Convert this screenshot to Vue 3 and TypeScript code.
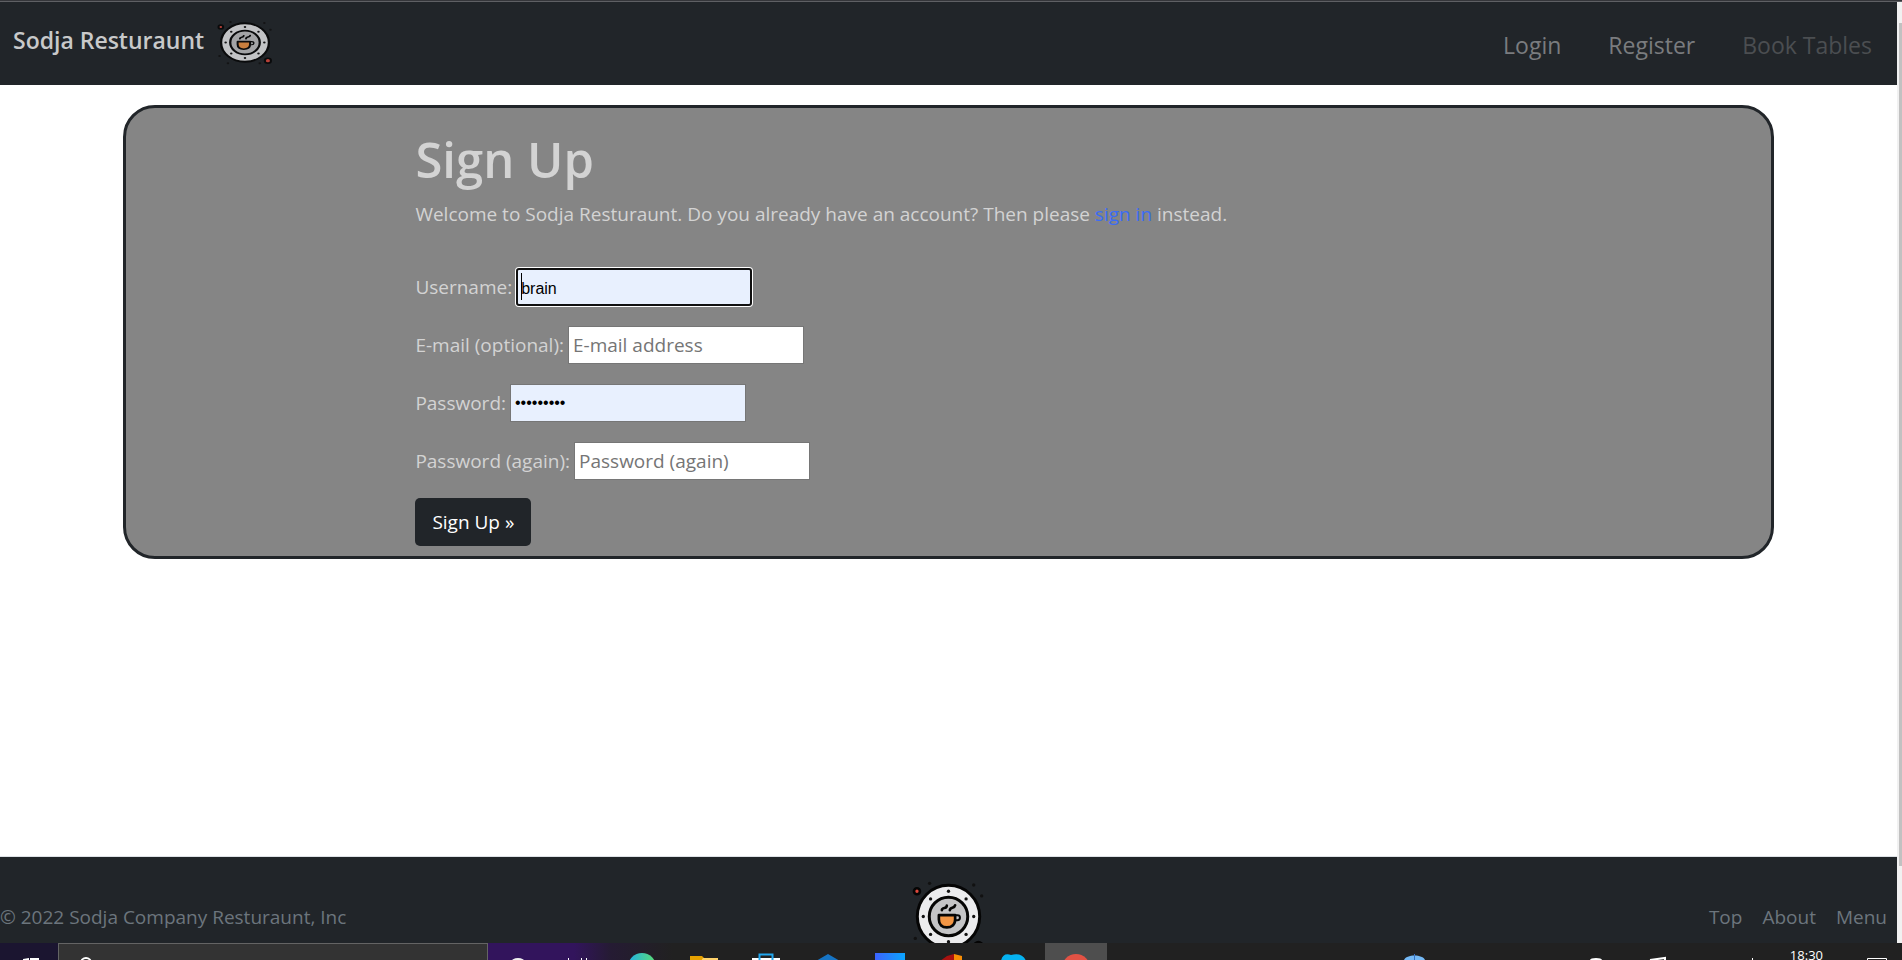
<script setup lang="ts">
import { ref } from 'vue'

interface NavItem {
  label: string
  disabled?: boolean
}

const navItems: NavItem[] = [
  { label: 'Login' },
  { label: 'Register' },
  { label: 'Book Tables', disabled: true },
]
const footerLinks: string[] = ['Top', 'About', 'Menu']

const username = ref('brain')
const email = ref('')
const password = ref('brain1234')
const passwordAgain = ref('')
</script>

<template>
  <div class="screen">
    <svg class="defs" aria-hidden="true">
      <symbol id="plate" viewBox="185 122 220 220" preserveAspectRatio="none">
        <circle cx="295" cy="232" r="94" fill="#ebebed" stroke="#050505" stroke-width="9" />
        <circle cx="295" cy="232" r="58" fill="#c4c4c6" stroke="#050505" stroke-width="9" />
        <g fill="#111">
          <circle cx="295" cy="156" r="5" /><circle cx="348" cy="179" r="5" />
          <circle cx="371" cy="232" r="5" /><circle cx="348" cy="286" r="5" />
          <circle cx="295" cy="308" r="5" /><circle cx="241" cy="286" r="5" />
          <circle cx="219" cy="232" r="5" /><circle cx="241" cy="179" r="5" />
          <circle cx="238" cy="132" r="5" /><circle cx="371" cy="137" r="5" />
          <circle cx="395" cy="170" r="5" /><circle cx="195" cy="298" r="5" />
          <circle cx="228" cy="333" r="5" /><circle cx="353" cy="333" r="5" />
        </g>
        <g fill="#e0483c" stroke="#050505" stroke-width="8">
          <circle cx="200" cy="156" r="9" /><circle cx="385" cy="321" r="12" />
        </g>
        <path d="M266 228H315V241C315 257 304 265 290 265S266 257 266 241Z" fill="#f29544" stroke="#050505" stroke-width="8" stroke-linejoin="round" />
        <path d="M315 228H322C332 228 332 243 322 243H315" fill="none" stroke="#050505" stroke-width="6" />
        <path d="M275 213C276 202 289 211 290 199M299 213C300 202 313 209 315 198" fill="none" stroke="#050505" stroke-width="8" stroke-linecap="round" />
      </symbol>
    </svg>

    <div class="window-edge"></div>

    <div class="viewport">
      <div class="page">
        <header class="navbar">
          <a class="brand" href="#">
            <span>Sodja Resturaunt</span>
            <svg class="brand-logo" aria-hidden="true"><use href="#plate" /></svg>
          </a>
          <nav class="nav-links">
            <a
              v-for="item in navItems"
              :key="item.label"
              href="#"
              :class="{ disabled: item.disabled }"
            >{{ item.label }}</a>
          </nav>
        </header>

        <main class="content">
          <section class="card">
            <div class="column">
              <h1>Sign Up</h1>
              <p class="intro">
                Welcome to Sodja Resturaunt. Do you already have an account? Then please
                <a href="#">sign in</a> instead.
              </p>
              <form @submit.prevent>
                <div class="field">
                  <label for="username">Username:</label>
                  <span class="focused">
                    <input id="username" v-model="username" class="filled" type="text" />
                    <span class="caret"></span>
                  </span>
                </div>
                <div class="field">
                  <label for="email">E-mail (optional):</label>
                  <input id="email" v-model="email" type="email" placeholder="E-mail address" />
                </div>
                <div class="field">
                  <label for="password">Password:</label>
                  <input id="password" v-model="password" class="filled" type="password" />
                </div>
                <div class="field">
                  <label for="password2">Password (again):</label>
                  <input id="password2" v-model="passwordAgain" type="password" placeholder="Password (again)" />
                </div>
                <button class="submit" type="submit">Sign Up »</button>
              </form>
            </div>
          </section>
        </main>

        <footer class="footer">
          <p>© 2022 Sodja Company Resturaunt, Inc</p>
          <svg class="footer-logo" aria-hidden="true"><use href="#plate" /></svg>
          <nav class="footer-links">
            <a v-for="link in footerLinks" :key="link" href="#">{{ link }}</a>
          </nav>
        </footer>
      </div>
      <div class="scrollbar"><div class="thumb"></div></div>
    </div>

    <div class="taskbar">
      <div class="start">
        <svg width="16" height="2" viewBox="0 0 16 2"><path d="M0 1L6 0V2H0ZM7 0H16V2H7Z" fill="#fff" /></svg>
      </div>
      <div class="search">
        <svg width="14" height="3" viewBox="0 0 14 3"><circle cx="7" cy="6" r="5" fill="none" stroke="#fff" stroke-width="2" /></svg>
      </div>
      <div class="highlights">
        <svg width="80" height="2" viewBox="0 0 80 2">
          <ellipse cx="7" cy="4" rx="7" ry="4" fill="#eee" />
          <path d="M57.500 0V2M70.500 0V2M75.500 0V2" stroke="#fff" />
        </svg>
      </div>
      <div class="app">
        <svg width="28" height="7" viewBox="0 0 28 7">
          <defs><linearGradient id="edge"><stop offset="0" stop-color="#22b1e6" /><stop offset="1" stop-color="#5bdc72" /></linearGradient></defs>
          <circle cx="14" cy="14" r="14" fill="url(#edge)" />
        </svg>
      </div>
      <div class="app">
        <svg width="28" height="7" viewBox="0 0 28 7"><path d="M0 3H12L14 5V8H0Z" fill="#e6a100" /><path d="M13 5H28V8H11Z" fill="#ffd36b" /></svg>
      </div>
      <div class="app">
        <svg width="28" height="7" viewBox="0 0 28 7"><path d="M0 5H28V8H0Z" fill="#fff" /><path d="M7.500 8V1.500H20.500V8" fill="none" stroke="#22a8f0" stroke-width="2" /></svg>
      </div>
      <div class="app">
        <svg width="28" height="7" viewBox="0 0 28 7"><path d="M14 1L26 8H2Z" fill="#1674c4" /></svg>
      </div>
      <div class="app">
        <svg width="30" height="7" viewBox="0 0 30 7">
          <defs><linearGradient id="tile"><stop offset="0" stop-color="#3c63ff" /><stop offset="1" stop-color="#0aa5ff" /></linearGradient></defs>
          <path d="M0 0H30V8H0Z" fill="url(#tile)" />
        </svg>
      </div>
      <div class="app">
        <svg width="28" height="7" viewBox="0 0 28 7"><path d="M2 8L9 3L16 1V8Z" fill="#a81210" /><path d="M16 1L24 3V8H16Z" fill="#f88d05" /></svg>
      </div>
      <div class="app">
        <svg width="28" height="7" viewBox="0 0 28 7"><path d="M1 8C2 2 6 0 11 2C18 0 24 2 26 8Z" fill="#05b2f0" /></svg>
      </div>
      <div class="app active">
        <svg width="28" height="7" viewBox="0 0 28 7"><circle cx="14" cy="15" r="14" fill="#e35244" /></svg>
      </div>
      <div class="tray">
        <svg width="350" height="6" viewBox="0 0 350 6">
          <path d="M0 6C2 0 19 0 21 6Z" fill="#75b9f5" /><path d="M10.500 6V0" stroke="#3673c9" />
          <ellipse cx="192" cy="6" rx="6" ry="2" fill="#fff" />
          <path d="M246 6L261 4V6" fill="none" stroke="#fff" stroke-width="2" />
          <path d="M348.500 4V6" stroke="#fff" />
        </svg>
        <time>18:30</time>
        <svg width="20" height="2" viewBox="0 0 20 2"><path d="M0.500 2V0.500H19.500V2" fill="none" stroke="#fff" /></svg>
      </div>
    </div>
  </div>
</template>

<style>
body {
  margin: 0;
  background: #fff;
}
</style>

<style scoped>
* {
  box-sizing: border-box;
}
.screen {
  display: flex;
  flex-direction: column;
  height: 100vh;
  overflow: hidden;
  font-family: "Open Sans", "Noto Sans", sans-serif;
  font-size: 19px;
  line-height: 30px;
  color: #d3d3d3;
}
.defs {
  position: absolute;
  width: 0;
  height: 0;
}
a {
  text-decoration: none;
  color: inherit;
}
svg {
  display: block;
  flex: none;
}
.window-edge {
  flex: none;
  height: 2px;
  background: #35363a;
  border-bottom: 1px solid #5f6064;
}
.viewport {
  display: flex;
  flex: 1;
  min-height: 0;
}
.page {
  display: flex;
  flex: 1;
  flex-direction: column;
}
.scrollbar {
  width: 5px;
  padding: 21px 0 77px 2px;
  background: #f1f1f1;
}
.thumb {
  height: 100%;
  background: #c1c1c1;
}
.navbar {
  display: flex;
  justify-content: space-between;
  height: 83px;
  padding: 18px 25px 0 13px;
  background: #212529;
}
.brand {
  display: flex;
  gap: 13px;
  font-size: 23px;
  font-weight: 600;
  line-height: 40px;
  color: #c8c9ca;
}
.brand-logo {
  width: 56px;
  height: 45px;
  opacity: 0.8;
}
.nav-links {
  display: flex;
  gap: 47px;
  padding-top: 5px;
  font-size: 23px;
  line-height: 40px;
  color: #7a7c7f;
}
.nav-links .disabled {
  color: #4b4e51;
}
.content {
  flex: 1;
  padding-top: 20px;
}
.card {
  width: 87%;
  margin: 0 auto;
  padding: 21px 0 10px;
  border: 3px solid #212529;
  border-radius: 32px;
  background: #858585;
}
.column {
  width: 67%;
  margin-left: 16.6667%;
  padding: 0 15px;
}
h1 {
  margin: 0 0 10px;
  font-size: 49px;
  font-weight: 600;
  line-height: 60px;
}
.intro {
  margin: 0 0 39px;
}
.intro a {
  color: #3b6cf6;
}
.field {
  display: flex;
  align-items: center;
  gap: 4px;
  height: 38px;
}
.field + .field {
  margin-top: 20px;
}
input {
  width: 236px;
  height: 38px;
  padding: 2px 4px;
  border: 1px solid #767676;
  background: #fff;
  color: #000;
  font: inherit;
}
input::placeholder {
  color: #757575;
  opacity: 1;
}
.filled {
  background: #e8f0fe;
  font-family: "Liberation Sans", Arial, sans-serif;
  font-size: 16px;
}
.focused {
  position: relative;
}
.focused input {
  display: block;
  border: 2px solid #101010;
  border-radius: 3px;
  box-shadow: 0 0 0 1px #fff;
  padding: 5px 3px 1px;
}
.caret {
  position: absolute;
  left: 5px;
  top: 5px;
  width: 1px;
  height: 27px;
  background: #000;
}
.submit {
  display: block;
  height: 48px;
  margin-top: 18px;
  padding: 0 17px;
  border: 0;
  border-radius: 5px;
  background: #212529;
  color: #fff;
  font: inherit;
}
.footer {
  display: grid;
  grid-template-columns: 1fr auto 1fr;
  height: 87px;
  overflow: hidden;
  padding-top: 23px;
  border-top: 1px solid #dee2e6;
  background: #212529;
  color: #6c757d;
}
.footer p {
  margin: 22px 0 0;
}
.footer-logo {
  width: 73px;
  height: 73px;
}
.footer-links {
  display: flex;
  justify-content: flex-end;
  gap: 20px;
  margin-top: 22px;
  padding-right: 10px;
}
.taskbar {
  display: flex;
  flex: none;
  height: 17px;
  overflow: hidden;
  background: #212121;
}
.start {
  display: flex;
  align-items: flex-end;
  width: 58px;
  padding-left: 23px;
  background: #1b1530;
}
.search {
  display: flex;
  align-items: flex-end;
  width: 430px;
  padding-left: 20px;
  border: 1px solid #646464;
  border-bottom: 0;
  background: #333;
}
.highlights {
  display: flex;
  align-items: flex-end;
  width: 123px;
  padding-left: 23px;
  background: linear-gradient(90deg, #32145c 0 70%, #251b33);
}
.highlights + .app {
  background: linear-gradient(90deg, #251b33, #212121);
}
.app {
  display: flex;
  align-items: flex-end;
  justify-content: center;
  width: 62px;
}
.app.active {
  background: #4e4e4e;
}
.tray {
  display: flex;
  flex: 1;
  align-items: flex-end;
  justify-content: flex-end;
  padding-right: 15px;
}
.tray time {
  height: 14px;
  margin: 0 44px 0 36px;
  color: #fff;
  font-size: 13px;
  line-height: 18px;
}
</style>
